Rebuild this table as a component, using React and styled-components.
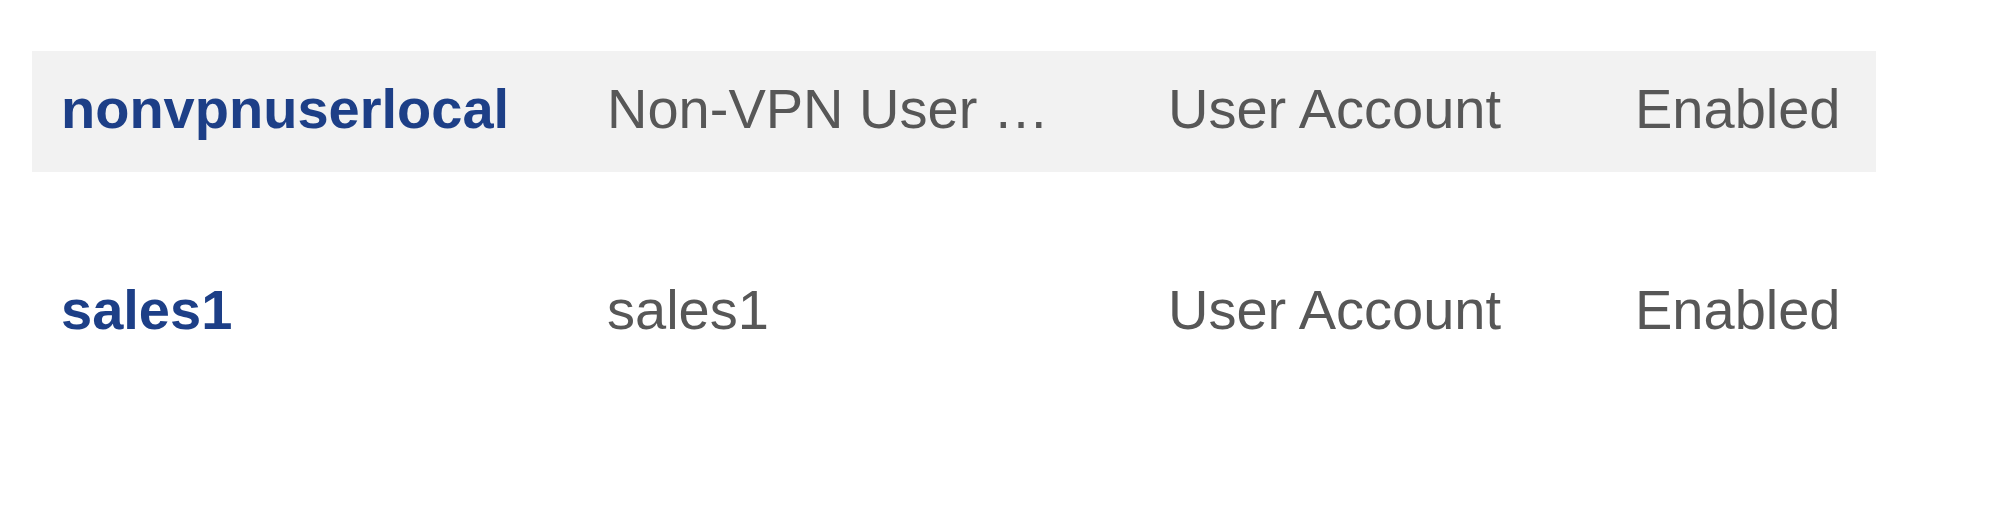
import React from "react";
import styled, { createGlobalStyle } from "styled-components";

const GlobalStyle = createGlobalStyle`
  html, body {
    margin: 0;
    padding: 0;
    background: #ffffff;
  }
  body {
    font-family: "Liberation Sans", Arial, sans-serif;
  }
`;

const users = [
  { name: "nonvpnuserlocal", description: "Non-VPN User …", type: "User Account", status: "Enabled" },
  { name: "sales1", description: "sales1", type: "User Account", status: "Enabled" },
];

const App = () => {
  return (
    <>
      <GlobalStyle />
      <Table>
        {users.map((u, i) => (
          <Row key={u.name} $striped={i % 2 === 0}>
            <NameCell>{u.name}</NameCell>
            <Cell>{u.description}</Cell>
            <Cell>{u.type}</Cell>
            <Cell>{u.status}</Cell>
          </Row>
        ))}
      </Table>
    </>
  );
};

export default App;

const Table = styled.div`
  display: grid;
  row-gap: 80px;
  width: 1844px;
  margin-left: 32px;
  padding-top: 51px;
`;

const Row = styled.div`
  display: grid;
  grid-template-columns: 546px 561px 467px 270px;
  align-items: center;
  height: 121px;
  background: ${(p) => (p.$striped ? "#f2f2f2" : "transparent")};
`;

const Cell = styled.div`
  padding-left: 29px;
  padding-bottom: 5px;
  font-size: 56px;
  line-height: 64px;
  color: #575757;
  white-space: nowrap;
`;

const NameCell = styled(Cell)`
  font-weight: 700;
  color: #1d3f87;
`;
